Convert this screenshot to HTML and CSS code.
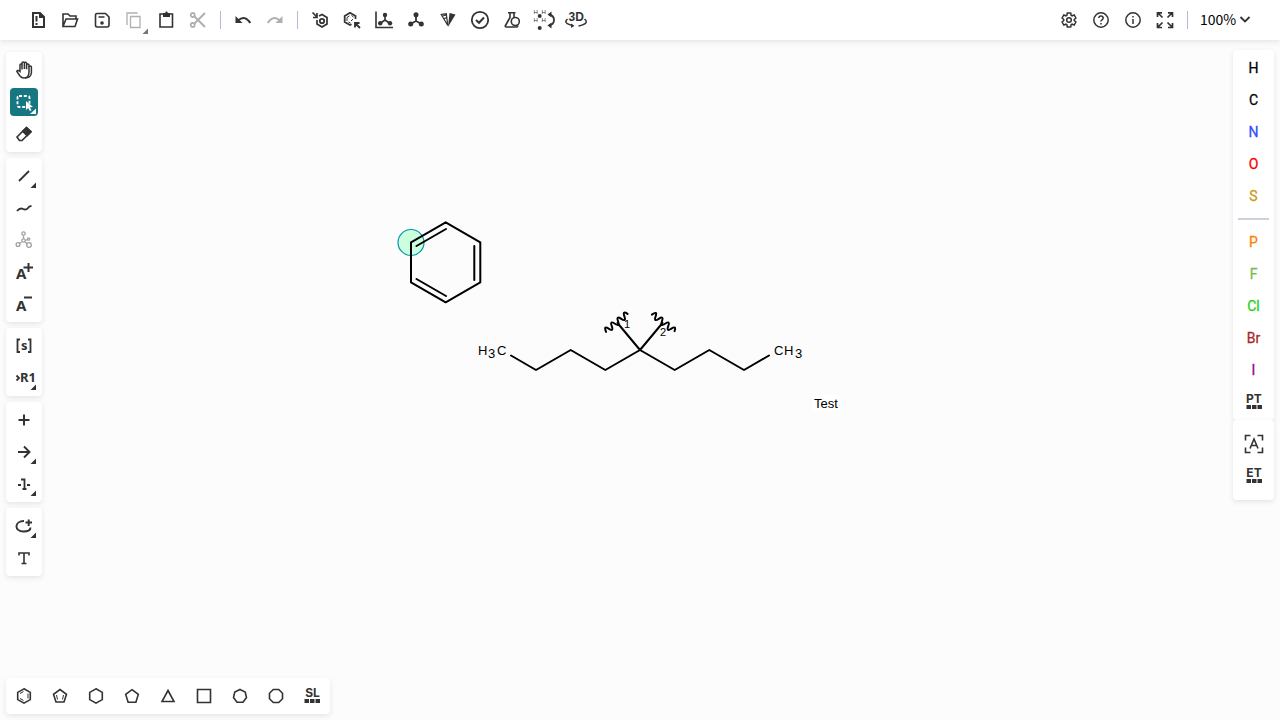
FILE: index.html
```html
<!DOCTYPE html>
<html lang="en">
<head>
<meta charset="utf-8">
<title>Structure editor</title>
<link rel="stylesheet" href="styles.css">
</head>
<body>
<div class="app">
  <svg class="canvas" viewBox="0 0 1280 720" role="img" aria-label="Drawing canvas">
    <circle class="hover" cx="411" cy="242.5" r="13"/>
    <path class="bond" d="M445.7 222.3L480.3 242.3V282.3L445.7 302.3L411 282.3V242.3ZM416.5 246L446 229M474.3 246V280M416.5 279L446 296"/>
    <path class="bond" d="M511 355.5L536 370L570.7 350L605.3 370L640 350L674.7 370L709.3 350L744 370L769 355.5M617.500 323L640 350L662.500 323"/>
    <path class="bond" transform="translate(616.5 322.500) rotate(-38)" d="M-14 1q2-7 4-1t4 0t4 0t4 0t4 0t4 0t4 0"/>
    <path class="bond" transform="translate(663.5 322.500) rotate(38)" d="M-14 1q2-7 4-1t4 0t4 0t4 0t4 0t4 0t4 0"/>
    <g class="atom">
      <text x="478" y="355">H</text><text x="488" y="358">3</text><text x="497" y="355">C</text>
      <text x="774" y="355">C</text><text x="784" y="355">H</text><text x="795" y="358">3</text>
    </g>
    <g class="attach"><text x="624" y="328">1</text><text x="660" y="336">2</text></g>
    <rect class="note-bg" x="812" y="395" width="27" height="16"/>
    <text class="note" x="814" y="408">Test</text>
  </svg>

  <header class="topbar">
    <div class="tools">
      <button class="btn" aria-label="Clear canvas"><svg viewBox="0 0 28 28"><path d="M9 7h7l4 4v10H9z" stroke-width="2"/><path class="f" d="M15 6l6 6h-6z"/><path d="M12.500 10v5.500M12.500 17v2" stroke-width="2"/></svg></button>
      <button class="btn" aria-label="Open"><svg viewBox="0 0 28 28"><path d="M7 20.500V8h5l2 2h6v3M7 20.500l3-7.500h11.500l-2.500 7.500z" stroke-width="1.600"/></svg></button>
      <button class="btn" aria-label="Save"><svg viewBox="0 0 28 28"><path d="M9 7.500h8.500l3.500 3.500v8q0 2-2 2H9q-1.500 0-1.500-2V9q0-1.500 1.500-1.500zM10.500 11h6" stroke-width="1.600"/><circle class="f" cx="14" cy="17" r="1.800"/></svg></button>
      <button class="btn off" aria-label="Copy" disabled><svg viewBox="0 0 28 28"><path d="M7 19V7h10.500M10.500 10.500h9.500v11h-9.500z" stroke-width="1.300"/><path class="corner" d="M28 22.500V28h-5.500z"/></svg></button>
      <button class="btn" aria-label="Paste"><svg viewBox="0 0 28 28"><path d="M8 8h12.500v13H8z" stroke-width="1.600"/><path class="f" d="M11 7h2l1-1.500h1l1 1.500h2v4h-7z"/></svg></button>
      <button class="btn off" aria-label="Cut" disabled><svg viewBox="0 0 28 28"><circle cx="8.700" cy="9" r="2"/><circle cx="8.700" cy="19" r="2"/><path d="M10.500 10.500L21 21M10.500 17.500L21 7" stroke-width="2"/></svg></button>
      <span class="sep"></span>
      <button class="btn" aria-label="Undo"><svg viewBox="0 0 28 28"><path class="f" d="M6.500 10v7h7z"/><path d="M9 14.500q7-6 12.300 2.500" stroke-width="2"/></svg></button>
      <button class="btn off" aria-label="Redo" disabled><svg viewBox="0 0 28 28"><path class="f" d="M21.500 10v7h-7z"/><path d="M19 14.500q-7-6-12.300 2.500" stroke-width="2"/></svg></button>
      <span class="sep"></span>
      <button class="btn" aria-label="Aromatize"><svg viewBox="0 0 28 28"><path d="M6.500 6.500l4.500 4.500M11 7v4.500H7M13 10l3-1.500l5 3v6.500L16 21l-5-3V14" stroke-width="1.700"/><circle cx="16" cy="15" r="2.200"/></svg></button>
      <button class="btn" aria-label="Dearomatize"><svg viewBox="0 0 28 28"><path d="M17.500 13V10L12 6.800L6.700 10v6L12 19l1.500-.8M22 22L17 17M17 21.500v-4.500H21.500" stroke-width="1.800"/><path d="M9 15v-3.500l2.500-1.700M13.500 9.500l2 1.500M10.500 16l2 1M15 13l-2 2" stroke-width="1"/></svg></button>
      <button class="btn" aria-label="Layout"><svg viewBox="0 0 28 28"><path d="M6 5.500V21.500h17M15 9v5l-5 3.500M15 14l5 3.500" stroke-width="1.600"/><g class="f"><circle cx="15" cy="9" r="2.200"/><circle cx="10.200" cy="17.200" r="2.200"/><circle cx="20" cy="17.200" r="2.200"/></g></svg></button>
      <button class="btn" aria-label="Clean up"><svg viewBox="0 0 28 28"><path d="M14 9v6l-5.500 3M14 15l5.500 3" stroke-width="1.800"/><g class="f"><circle cx="14" cy="8.700" r="2.500"/><circle cx="8.700" cy="18" r="2.500"/><circle cx="19.300" cy="18" r="2.500"/></g></svg></button>
      <button class="btn" aria-label="Calculate CIP"><svg viewBox="0 0 28 28"><path d="M13.800 19.500L7.200 8.500L12.300 7.800zM8.500 10l4-1M10 12.500l3-.8" stroke-width="1.200"/><path class="f" d="M15.500 7l6 1.500L14 21z"/></svg></button>
      <button class="btn" aria-label="Check structure"><svg viewBox="0 0 28 28"><circle cx="14" cy="14" r="8.200"/><path d="M10 14l3 2.800l5-5.300" stroke-width="2"/></svg></button>
      <button class="btn" aria-label="Calculated values"><svg viewBox="0 0 28 28"><path d="M10 6.800h7.500M12 7v4.500L7.500 19.500q-.8 1.500 1 1.500h10q1.500 0 1-1.500M16 7v4.500" stroke-width="1.600"/><circle cx="17.300" cy="15.500" r="4" stroke-width="1.600"/></svg></button>
      <button class="btn" aria-label="Add or remove explicit hydrogens"><svg viewBox="0 0 28 28"><g class="tiny"><text x="3.500" y="8">H</text><text x="11.500" y="8">H</text><text x="3.500" y="16">H</text><text x="11.500" y="16">H</text></g><circle class="f" cx="9.700" cy="10" r="2"/><circle class="f" cx="9.700" cy="22" r="2"/><path d="M19 8.500q5 1 5 5.500t-5 5.500" /><path class="f" d="M17.500 8.500l4-3v6zM17.500 19.500l4-3v6z"/></svg></button>
      <button class="btn" aria-label="3D viewer"><svg viewBox="0 0 28 28"><text class="t3d" x="6.500" y="14.500">3D</text><path d="M5.500 13q-5 4 5 6.500M22.500 13q5.500 4.500-6 7" stroke-width="1.500"/><path class="f" d="M9 17.500l3.500 2.200L9 22z"/></svg></button>
    </div>
    <div class="tools">
      <button class="btn" aria-label="Settings"><svg viewBox="0 0 28 28"><path d="M12.300 7h3.400l.4 2.200l1 .6l2.100-.8l1.700 3l-1.700 1.500v1l1.700 1.500l-1.700 3l-2.100-.8l-1 .6l-.4 2.200h-3.400l-.4-2.200l-1-.6l-2.100.8l-1.700-3l1.700-1.500v-1l-1.700-1.500l1.700-3l2.100.8l1-.6z" stroke-width="1.500"/><circle cx="14" cy="14" r="2.300" stroke-width="1.500"/></svg></button>
      <button class="btn" aria-label="Help"><svg viewBox="0 0 28 28"><circle cx="14" cy="14" r="7.200" stroke-width="1.500"/><path d="M11.800 12q.2-2 2.200-2t2.200 2q0 1-1.200 1.800t-1 1.700M14 17v1.600" stroke-width="1.500"/></svg></button>
      <button class="btn" aria-label="About"><svg viewBox="0 0 28 28"><circle cx="14" cy="14" r="7.200" stroke-width="1.500"/><path d="M14 13v5M14 10v1.500" stroke-width="1.500"/></svg></button>
      <button class="btn" aria-label="Fullscreen"><svg viewBox="0 0 28 28"><path d="M6.500 11V6.800H11M17 6.800h4.500V11M21.500 17v4.500H17M11 21.500H6.500V17M7 7l4.500 4.500M21 7l-4.500 4.500M21 21l-4.500-4.500M7 21l4.500-4.500" stroke-width="1.700"/></svg></button>
      <span class="sep"></span>
      <button class="zoom">100%<svg viewBox="0 0 12 12"><path d="M1.500 4l4.500 4.500l4.500-4.500"/></svg></button>
    </div>
  </header>

  <main class="work">
    <nav class="side" aria-label="Drawing tools">
      <div class="panel">
        <button class="btn" aria-label="Hand"><svg viewBox="0 0 28 28"><path d="M10 15.500V9q0-1 1-1t1 1v4.500V7q0-1 1.200-1t1.200 1v6V7.200q0-1 1-1t1.200 1v6V9q0-1 1.200-1t1.200 1v7q0 6-5 6q-2.500 0-4-2L6.800 15.500q.5-1.500 2-.8z" stroke-width="1.500"/><path d="M19 11q0-1 1.200-1t1.200 1v6q-.5 5-6.400 5" stroke-width="1.500"/></svg></button>
        <button class="btn active" aria-label="Rectangle selection"><svg viewBox="0 0 28 28"><rect x="7.500" y="8" width="12" height="11" rx="1.500" stroke-dasharray="3 1.800"/><path class="f" d="M16 13l7 6l-3 .3l1.500 3l-1.700.8l-1.500-3L16 22z"/><path class="corner" d="M26 20.500v5.500h-6z"/></svg></button>
        <button class="btn" aria-label="Erase"><svg viewBox="0 0 28 28"><path d="M16.500 7.500l4.500 4L12 20.500H9.500L7 17z" stroke-width="1.600"/><path class="f" d="M16.500 6.500l5.500 5.500l-4.800 4.800l-5.700-5.500z"/></svg></button>
      </div>
      <div class="panel">
        <button class="btn" aria-label="Single bond"><svg viewBox="0 0 28 28"><path d="M9 19L19 9"/><path class="corner" d="M26 20.500v5.500h-5.500z"/></svg></button>
        <button class="btn" aria-label="Chain"><svg viewBox="0 0 28 28"><path d="M7 17q3-3.500 6-2t5-1q1-2 3.500-2" stroke-width="1.900"/></svg></button>
        <button class="btn off" aria-label="Enhanced stereochemistry" disabled><svg viewBox="0 0 28 28"><circle cx="13.500" cy="7.500" r="1.700"/><circle cx="8" cy="18.500" r="1.900"/><circle cx="19" cy="19" r="2.300"/><circle cx="18.500" cy="13" r="1.200"/><circle cx="13.500" cy="14.500" r="1.700"/><path d="M13.500 9.500v3M11.500 16L9.500 17.500M15 16l2.500 2M15.500 14.500l2-1"/></svg></button>
        <button class="btn" aria-label="Charge plus"><svg viewBox="0 0 28 28"><text class="big-a" x="6" y="21">A</text><path d="M13.500 9.500h9.500M18.500 5v9" stroke-width="2"/></svg></button>
        <button class="btn" aria-label="Charge minus"><svg viewBox="0 0 28 28"><text class="big-a" x="6" y="21">A</text><path d="M14 7.500h8" stroke-width="2"/></svg></button>
      </div>
      <div class="panel">
        <button class="btn" aria-label="S-group"><svg viewBox="0 0 28 28"><path d="M10 7.500H7.500v12.500H10M18 7.500h2.500v12.500H18"/><text class="glyph" x="11" y="18">s</text></svg></button>
        <button class="btn" aria-label="R-group"><svg viewBox="0 0 28 28"><path d="M6.500 11.500l2.500 2.500l-2.500 2.500"/><text class="glyph" x="10" y="18">R1</text><path class="corner" d="M26 20.500v5.500h-5.500z"/></svg></button>
      </div>
      <div class="panel">
        <button class="btn" aria-label="Reaction plus"><svg viewBox="0 0 28 28"><path d="M8.500 14h11M14 8.500v11" stroke-width="2"/></svg></button>
        <button class="btn" aria-label="Reaction arrow"><svg viewBox="0 0 28 28"><path d="M8 14h11M14 8.500l5.500 5.500l-5.500 5.500" stroke-width="1.900"/><path class="corner" d="M26 20.500v5.500h-5.500z"/></svg></button>
        <button class="btn" aria-label="Reaction mapping"><svg viewBox="0 0 28 28"><path d="M8 15h3M17 15h3M11 9.500H14.500v10M12.500 19h4" stroke-width="1.800"/><path class="corner" d="M26 20.500v5.500h-5.500z"/></svg></button>
      </div>
      <div class="panel">
        <button class="btn" aria-label="Shape ellipse"><svg viewBox="0 0 28 28"><path d="M14 9C4 9 4 19.500 13.500 19.500q7 0 7-4" stroke-width="1.900"/><path d="M15.500 10.500h6.500M18.700 7.500v6.500" stroke-width="1.900"/><path class="corner" d="M26 20.500v5.500h-5.500z"/></svg></button>
        <button class="btn" aria-label="Add text"><svg viewBox="0 0 28 28"><path d="M9 11.500V9h10v2.500M14 9v11M11.500 19.500H16.500" stroke-width="1.600"/></svg></button>
      </div>
    </nav>

    <aside class="side atoms" aria-label="Atoms">
      <div class="panel">
        <button class="btn el">H</button>
        <button class="btn el">C</button>
        <button class="btn el n">N</button>
        <button class="btn el o">O</button>
        <button class="btn el su">S</button>
        <span class="rule"></span>
        <button class="btn el p">P</button>
        <button class="btn el fl">F</button>
        <button class="btn el cl">Cl</button>
        <button class="btn el br">Br</button>
        <button class="btn el i">I</button>
        <button class="btn" aria-label="Periodic table"><svg viewBox="0 0 28 28"><text class="label" x="14" y="15">PT</text><path class="f" d="M6.500 17h4.500v4H6.500zM12 17h4.500v4H12zM17.500 17H22v4h-4.500z"/></svg></button>
      </div>
      <div class="panel extra">
        <button class="btn" aria-label="Any atom"><svg viewBox="0 0 28 28"><path d="M10.500 5.500h-5v5M17.500 5.500h5v5M22.500 17.500v5h-5M10.500 22.500h-5v-5M10 18.500l4-9.500l4 9.500M11.500 15.500h5" stroke-width="1.600"/></svg></button>
        <button class="btn" aria-label="Extended table"><svg viewBox="0 0 28 28"><text class="label" x="14" y="15">ET</text><path class="f" d="M6.500 17h4.500v4H6.500zM12 17h4.500v4H12zM17.500 17H22v4h-4.500z"/></svg></button>
      </div>
    </aside>
  </main>

  <footer class="bottom">
    <div class="panel templates">
      <button class="btn" aria-label="Benzene"><svg viewBox="0 0 28 28"><path d="M14 6.800l6.300 3.600v7.200L14 21.200l-6.300-3.600v-7.200z"/><path d="M10 11.500l3.500-2M18 11.500v5M10 16.500l3.500 2" stroke-width="1"/></svg></button>
      <button class="btn" aria-label="Cyclopentadiene"><svg viewBox="0 0 28 28"><path d="M14 7.500l6.500 4.800l-2.500 7.700h-8l-2.500-7.700z"/><path d="M10.500 13l1 4.500M17.500 13l-1 4.500" stroke-width="1"/></svg></button>
      <button class="btn" aria-label="Cyclohexane"><svg viewBox="0 0 28 28"><path d="M14 6.800l6.300 3.600v7.200L14 21.200l-6.300-3.600v-7.200z"/></svg></button>
      <button class="btn" aria-label="Cyclopentane"><svg viewBox="0 0 28 28"><path d="M14 7.700l6.300 4.700l-2.400 7.800h-7.800l-2.400-7.800z"/></svg></button>
      <button class="btn" aria-label="Cyclopropane"><svg viewBox="0 0 28 28"><path d="M14 8.500l6 11H8z"/></svg></button>
      <button class="btn" aria-label="Cyclobutane"><svg viewBox="0 0 28 28"><path d="M7.500 7.500h13v13h-13z"/></svg></button>
      <button class="btn" aria-label="Cycloheptane"><svg viewBox="0 0 28 28"><path d="M14 7.500l5.200 2.500l1.300 5.500l-3.500 4.800h-6l-3.500-4.800l1.300-5.500z"/></svg></button>
      <button class="btn" aria-label="Cyclooctane"><svg viewBox="0 0 28 28"><path d="M11.300 7.500h5.400l3.800 3.800v5.400l-3.800 3.800h-5.400l-3.800-3.800v-5.400z"/></svg></button>
      <button class="btn" aria-label="Structure library"><svg viewBox="0 0 28 28"><text class="label" x="14.500" y="15">SL</text><path class="f" d="M6.500 17h4.500v4H6.500zM12 17h4.500v4H12zM17.500 17H22v4h-4.500z"/></svg></button>
    </div>
  </footer>
</div>
</body>
</html>
```

FILE: styles.css
```css
* { box-sizing: border-box; }
body { margin: 0; font-family: Inter, "Liberation Sans", sans-serif; color: #333; }
.app {
  position: relative;
  display: flex;
  flex-direction: column;
  min-height: 100vh;
  background: #fcfcfc;
}
.canvas { position: absolute; inset: 0; width: 100%; height: 100%; }
.bond { fill: none; stroke: #000; stroke-width: 2; stroke-linecap: round; stroke-linejoin: round; }
.hover { fill: #ccffdd; stroke: #0097a8; stroke-width: 1.2; }
.atom, .attach, .note { font-family: "Liberation Sans", Arial, sans-serif; font-size: 13px; fill: #000; }
.attach { font-size: 11px; }
.note-bg { fill: #fff; }

.topbar {
  position: relative;
  display: flex;
  justify-content: space-between;
  align-items: center;
  height: 40px;
  padding: 0 24px;
  background: #fff;
  box-shadow: 0 2px 5px rgba(103, 104, 132, 0.15);
}
.tools { display: flex; align-items: center; gap: 4px; }
.sep { width: 1px; height: 18px; margin: 0 4px; background: #b4b9d6; }

.btn {
  display: block;
  flex: none;
  width: 28px;
  height: 28px;
  padding: 0;
  border: 0;
  border-radius: 4px;
  background: none;
  color: #333;
}
.btn svg { display: block; width: 28px; height: 28px; overflow: visible; }
.btn svg, .zoom svg { fill: none; stroke: currentColor; stroke-width: 1.8; }
.templates .btn svg { stroke-width: 1.6; }
.btn .f, .btn .corner, .btn text { fill: currentColor; stroke: none; }
.btn.active { background: #167782; color: #fff; }
.btn.off { color: #b0b0b0; }
.side .off svg { stroke-width: 1.3; color: #a0a0a0; }
.btn.off .corner { fill: #777; }
.tiny { font: 6px "Liberation Sans", sans-serif; }
.t3d { font: bold 12px "Liberation Sans", sans-serif; }
.big-a { font: bold 15px "Noto Sans", sans-serif; }
.glyph { font: bold 13px "Noto Sans", sans-serif; }
.label { font: bold 12px Inter, sans-serif; text-anchor: middle; }

.zoom {
  display: flex;
  align-items: center;
  gap: 3px;
  width: 60px;
  padding: 0 4px 2px;
  border: 0;
  background: none;
  font: 14px "Noto Sans CJK SC", sans-serif;
  line-height: 20px;
  color: #000;
  white-space: nowrap;
}
.zoom svg { flex: none; width: 12px; height: 12px; color: #333; }

.work {
  position: relative;
  display: flex;
  flex: 1;
  justify-content: space-between;
  align-items: flex-start;
  padding: 12px 6px;
}
.side { display: flex; flex-direction: column; gap: 6px; }
.panel {
  display: flex;
  flex-direction: column;
  align-items: center;
  gap: 4px;
  padding: 4px;
  border-radius: 4px;
  background: #fff;
  box-shadow: 0 2px 5px rgba(103, 104, 132, 0.15);
}
.atoms { gap: 0; width: 41px; margin-top: -2px; }
.extra { padding: 10px 4px; }
.el { font: 400 14px Roboto, sans-serif; color: #000; -webkit-text-stroke: 0.3px currentColor; }
.n { color: #304ff7; }
.o { color: #f00; }
.su { color: #c99a19; }
.p { color: #ff8000; }
.fl { color: #78bc42; }
.cl { color: #1fd01f; }
.br { color: #a62929; }
.i { color: #940094; }
.rule { width: 31px; height: 2px; margin: 4px 0; background: #cad3dd; }

.bottom { position: relative; display: flex; padding: 0 6px 6px; }
.templates { flex-direction: row; gap: 8px; }
```
